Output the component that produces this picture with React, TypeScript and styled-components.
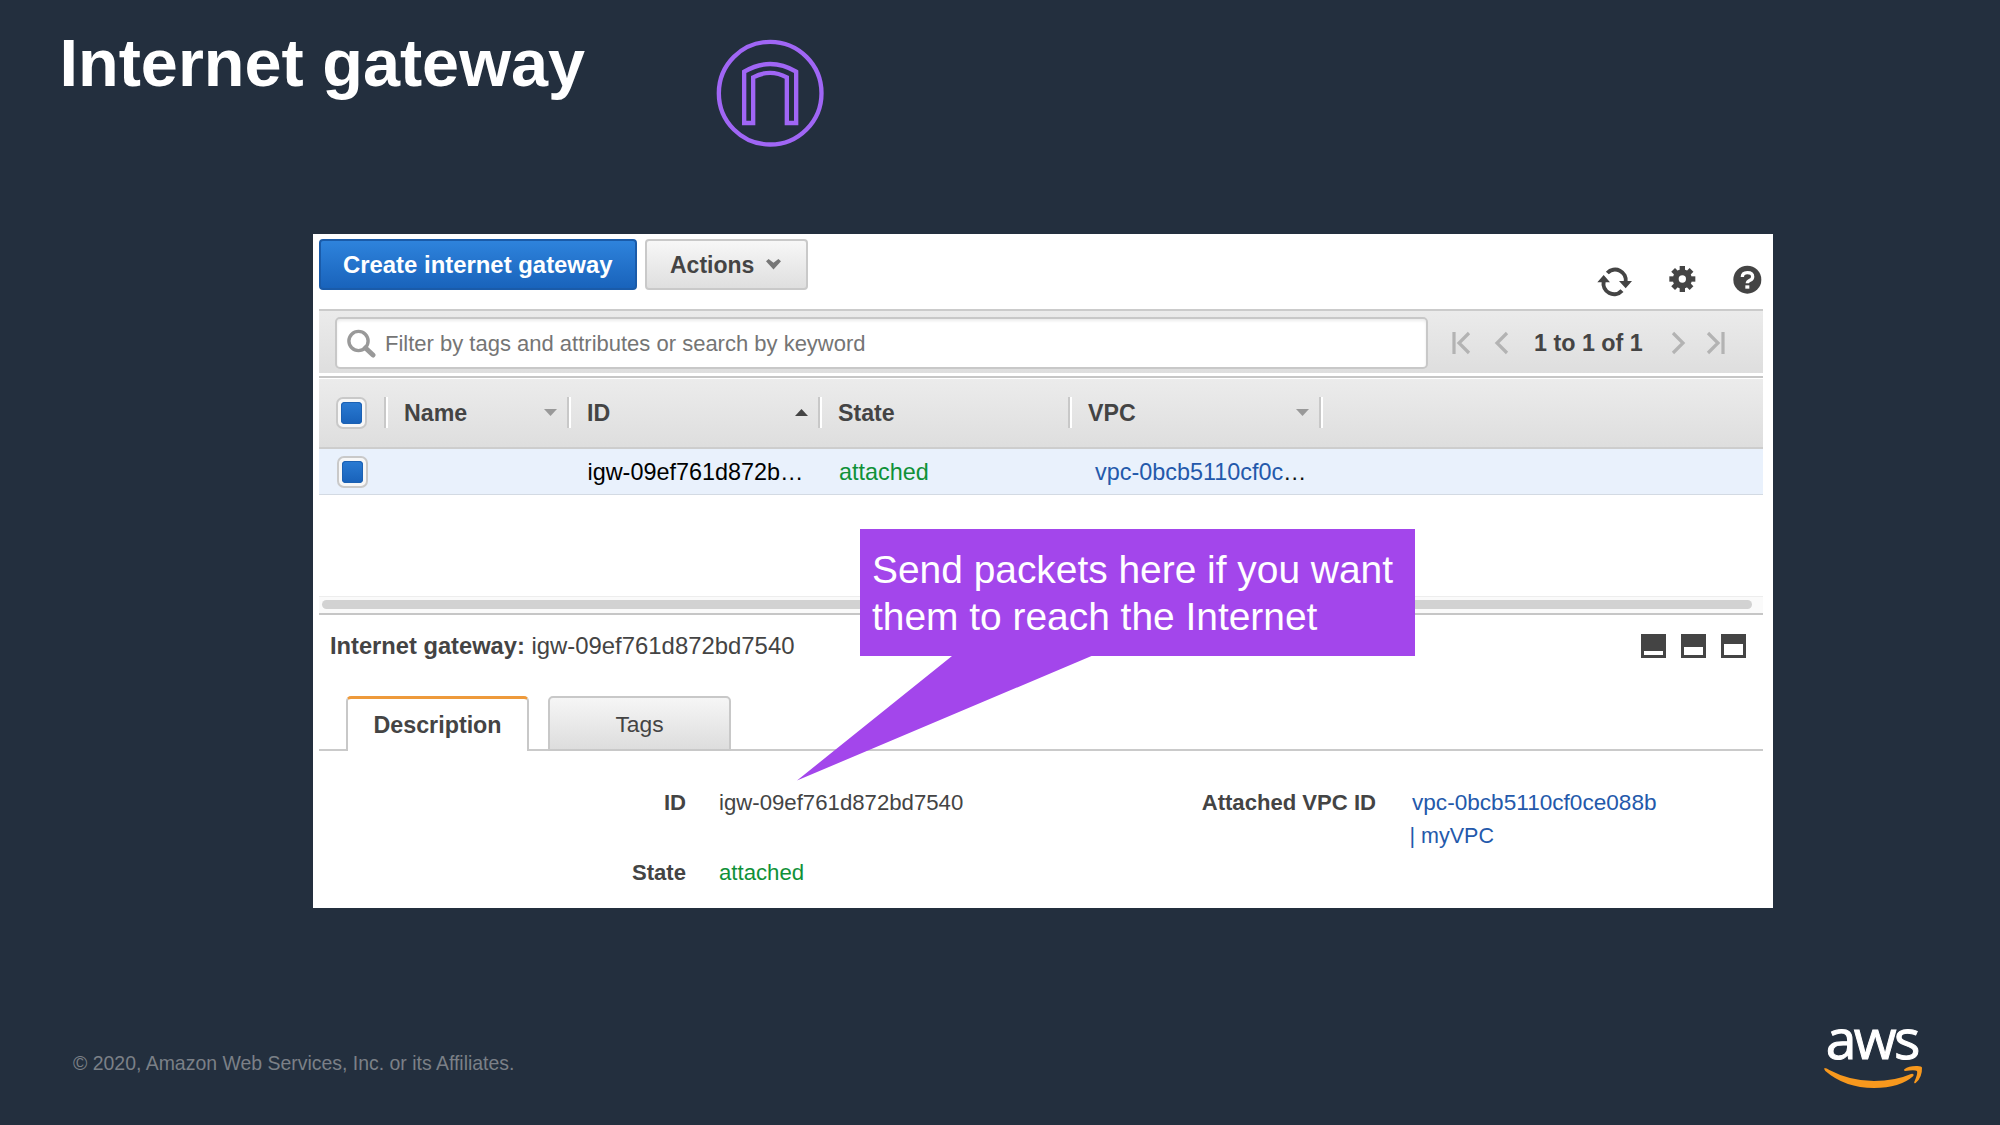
import React from "react";
import styled, { createGlobalStyle, css } from "styled-components";

const GlobalStyle = createGlobalStyle`
  *, *::before, *::after { box-sizing: border-box; }
  html, body { margin: 0; padding: 0; background: #232f3e; }
  body { font-family: "Liberation Sans", Arial, Helvetica, sans-serif; }
`;

const Slide = styled.main`
  width: 2000px;
  height: 1125px;
  display: flex;
  flex-direction: column;
  background: #232f3e;
  overflow: hidden;
`;

const SlideHeader = styled.header`
  display: flex;
  align-items: flex-start;
  height: 234px;
  padding: 25px 0 0 59.5px;
`;

const Title = styled.h1`
  margin: 0;
  width: 650.5px;
  font-size: 66.6px;
  line-height: 76px;
  font-weight: 700;
  color: #fff;
  white-space: nowrap;
`;

const GatewayIcon = styled.svg`
  width: 120px;
  height: 120px;
  margin-top: 9px;
`;

const Panel = styled.section`
  position: relative;
  width: 1460px;
  height: 674px;
  margin-left: 313px;
  padding: 0 10px 0 6px;
  background: #fff;
  color: #444;
  display: flex;
  flex-direction: column;
`;

const Toolbar = styled.div`
  display: flex;
  justify-content: space-between;
  height: 75px;
  padding: 5px 1px 0 0;
`;

const ButtonGroup = styled.div`
  display: flex;
  gap: 8px;
`;

const Button = styled.button<{ $primary?: boolean }>`
  display: flex;
  align-items: center;
  height: 51px;
  padding: 1px 23px 0;
  border-radius: 4px;
  font: 700 23px/26px "Liberation Sans", Arial, sans-serif;
  white-space: nowrap;
  ${(p) =>
    p.$primary
      ? css`
          width: 318px;
          padding-left: 22px;
          border: 2px solid #1a5ba9;
          background: linear-gradient(#2e83dc, #1963bb);
          color: #fff;
          font-size: 23.9px;
        `
      : css`
          width: 163px;
          border: 2px solid #c9c9c9;
          background: linear-gradient(#f7f7f7, #dfdfdf);
          color: #444;
          gap: 11px;
        `}
`;

const ToolIcons = styled.div`
  display: flex;
  align-items: flex-start;
  padding-top: 21px;
`;

const ToolIcon = styled.svg`
  width: 180px;
  height: 50px;
  margin: 0 -8px 0 0;
`;

const FilterBar = styled.div`
  display: flex;
  align-items: center;
  height: 64px;
  padding: 2px 37px 0 16px;
  border-top: 2px solid #cbcbcb;
  background: linear-gradient(#ebebeb, #dedede);
`;

const SearchBox = styled.div`
  display: flex;
  align-items: center;
  width: 1094px;
  height: 52px;
  padding-left: 9px;
  gap: 8px;
  border: 2px solid #c8c8c8;
  border-radius: 5px;
  background: #fff;
  box-shadow: inset 0 2px 3px #ececec;
`;

const Placeholder = styled.span`
  padding-top: 2px;
  font-size: 22px;
  line-height: 26px;
  color: #757575;
`;

const Pager = styled.nav`
  flex: 1;
  display: flex;
  align-items: center;
  padding-left: 23px;
`;

const PagerArrow = styled.svg<{ $gap?: number }>`
  width: 20px;
  height: 24px;
  margin-right: ${(p) => p.$gap ?? 0}px;
  fill: none;
  stroke: #b3b3b3;
  stroke-width: 3.2;
`;

const PagerText = styled.span`
  width: 137px;
  font-size: 23.3px;
  font-weight: 700;
  line-height: 26px;
  white-space: nowrap;
`;

const Row = styled.div<{ $head?: boolean }>`
  display: grid;
  grid-template-columns: 65px 183px 251px 250px 251px 1fr;
  align-items: center;
  ${(p) =>
    p.$head
      ? css`
          height: 73px;
          margin-top: 3px;
          border-top: 2px solid #c6c6c6;
          border-bottom: 2px solid #cdcdcd;
          box-shadow: inset 0 1px #fff;
          background: linear-gradient(#ececec, #dedede);
          font-weight: 700;
          font-size: 23.2px;
        `
      : css`
          height: 46px;
          border-bottom: 1px solid #d3dae3;
          background: #e9f1fc;
          font-size: 23.4px;
          color: #000;
        `}
`;

const HeadCell = styled.div`
  display: flex;
  align-items: center;
  justify-content: space-between;
  height: 31px;
  padding: 0 10px 0 18px;
  border-left: 2px solid #c8c8c8;
  box-shadow: inset 2px 0 #fff;
`;

const HeadLabel = styled.span`
  padding-top: 2px;
`;

const CheckCell = styled.div<{ $shift?: number }>`
  padding-left: ${(p) => 17 + (p.$shift ?? 0)}px;
`;

const Checkbox = styled.div`
  display: grid;
  place-items: center;
  width: 31px;
  height: 32px;
  border: 2px solid #c9c9c9;
  border-radius: 7px;
  background: #f7f7f7;
  &::after {
    content: "";
    width: 21px;
    height: 22px;
    border-radius: 4px;
    background: linear-gradient(#2a7bd3, #1861b9);
    box-shadow: inset 0 0 0 1px #1b61b3;
  }
`;

const SortArrow = styled.svg<{ $active?: boolean }>`
  width: 13px;
  height: 7px;
  fill: ${(p) => (p.$active ? "#444" : "#999")};
`;

const Cell = styled.div<{ $pad?: number; $tone?: "green" | "link" }>`
  padding-left: ${(p) => p.$pad ?? 0}px;
  line-height: 28px;
  white-space: nowrap;
  color: ${(p) => (p.$tone === "green" ? "#0f9138" : p.$tone === "link" ? "#2459ab" : "#000")};
`;

const Dots = styled.span`
  color: #111;
`;

const ScrollTrack = styled.div`
  height: 19px;
  margin-top: 101px;
  padding: 3px 11px 0 3px;
  border-top: 1px solid #ededed;
  border-bottom: 2px solid #c6c6c6;
  background: #fafafa;
`;

const ScrollThumb = styled.div`
  height: 9px;
  border-radius: 5px;
  background: #d2d2d2;
`;

const DetailHeader = styled.div`
  display: flex;
  align-items: center;
  justify-content: space-between;
  height: 62px;
  padding: 0 17px 0 11px;
  font-size: 23.9px;
  line-height: 28px;
`;

const DetailName = styled.strong`
  font-size: 23.7px;
`;

const SizeButtons = styled.div`
  display: flex;
  gap: 15px;
`;

const SizeButton = styled.span<{ $open: number }>`
  display: flex;
  align-items: flex-end;
  width: 25px;
  height: 24px;
  padding: 3px;
  background: #444;
  &::after {
    content: "";
    width: 19px;
    height: ${(p) => p.$open}px;
    background: #fff;
  }
`;

const TabStrip = styled.div`
  display: flex;
  align-items: flex-end;
  height: 74px;
  padding-left: 27px;
  gap: 19px;
  box-shadow: inset 0 -2px #cacaca;
`;

const Tab = styled.div<{ $active?: boolean }>`
  width: 183px;
  height: 55px;
  text-align: center;
  border: 2px solid #c8c8c8;
  border-radius: 5px 5px 0 0;
  line-height: 52px;
  ${(p) =>
    p.$active
      ? css`
          border-top: 3px solid #ee9a3b;
          border-bottom: 0;
          background: #fff;
          font-weight: 700;
          font-size: 23.3px;
        `
      : css`
          background: linear-gradient(#f6f6f6, #dddddd);
          font-size: 22.8px;
        `}
`;

const Details = styled.dl`
  display: grid;
  grid-template-columns: 367px 367px 323px 1fr;
  grid-template-rows: 70px 34px;
  margin: 35px 0 0;
  font-size: 22.1px;
  line-height: 34px;
`;

const Label = styled.dt`
  text-align: right;
  font-weight: 700;
`;

const Value = styled.dd<{ $tone?: "green" | "link"; $indent: number }>`
  margin: 0;
  padding-left: ${(p) => p.$indent}px;
  font-size: ${(p) => (p.$tone === "link" ? 22.6 : 22.2)}px;
  line-height: 34px;
  white-space: nowrap;
  color: ${(p) => (p.$tone === "green" ? "#0f9138" : p.$tone === "link" ? "#2459ab" : "#444")};
`;

const VpcName = styled.div`
  font-size: 21.5px;
  margin-left: -2.5px;
  line-height: 32px;
`;

const Callout = styled.aside`
  position: absolute;
  left: 546.5px;
  top: 295px;
  width: 555.5px;
  height: 127px;
  padding: 18px 0 0 12.5px;
  background: #a346eb;
  color: #fff;
  font-size: 38.9px;
  line-height: 46.6px;
  white-space: nowrap;
`;

const CalloutTail = styled.svg`
  position: absolute;
  left: 484px;
  top: 421px;
  width: 300px;
  height: 127px;
  fill: #a346eb;
`;

const SlideFooter = styled.footer`
  flex: 1;
  display: flex;
  justify-content: space-between;
  align-items: flex-start;
  padding: 102px 50px 0 73px;
`;

const Copyright = styled.p`
  margin: 42px 0 0;
  font-size: 19.45px;
  line-height: 22px;
  color: #7b8087;
`;

const AwsLogo = styled.svg`
  width: 150px;
  height: 90px;
  overflow: visible;
  text {
    font-family: "Open Sans", "Noto Sans", sans-serif;
    font-size: 166px;
    fill: #fff;
    stroke: #fff;
    stroke-width: 3;
  }
`;

const tooth = [0, 45, 90, 135, 180, 225, 270, 315];

export default function App() {
  return (
    <>
      <GlobalStyle />
      <Slide>
        <SlideHeader>
          <Title>Internet gateway</Title>
          <GatewayIcon viewBox="0 0 360 360" fill="none" stroke="#a066f5">
            <circle cx="180.5" cy="177.5" r="154" strokeWidth="13" />
            <path
              d="M102.500 267V113Q180.500 67 258.500 113V267H230.500V130Q180.500 103 129.500 130V267Z"
              strokeWidth="13"
            />
          </GatewayIcon>
        </SlideHeader>

        <Panel>
          <Toolbar>
            <ButtonGroup>
              <Button $primary>Create internet gateway</Button>
              <Button>
                Actions
                <svg width="17" height="12" viewBox="0 0 17 12">
                  <path d="M1 2.200 3.600 0 8.500 3.800 13.400 0 16 2.200 8.500 10.500Z" fill="#777" />
                </svg>
              </Button>
            </ButtonGroup>
            <ToolIcons>
              <ToolIcon viewBox="0 0 540 150">
                <g fill="none" stroke="#444" strokeWidth="12">
                  <path d="M52 39A32 32 0 0 1 107 66" />
                  <path d="M96 92A32 32 0 0 1 41 64" />
                </g>
                <path d="M87 63H126L107 85ZM22 67H60L41 45Z" fill="#444" />
                <g fill="#444">
                  {tooth.map((a) => (
                    <rect key={a} x="269" y="18" width="16" height="18" transform={`rotate(${a} 277 57)`} />
                  ))}
                </g>
                <circle cx="277" cy="57" r="20" fill="none" stroke="#444" strokeWidth="18" />
                <circle cx="472" cy="59" r="42" fill="#444" />
                <path d="M457 51Q457 38 472 38Q488 38 488 50Q488 57 480 61Q472 65 472 70" fill="none" stroke="#fff" strokeWidth="10" />
                <rect x="466" y="76" width="12" height="10" fill="#fff" />
              </ToolIcon>
            </ToolIcons>
          </Toolbar>

          <FilterBar>
            <SearchBox>
              <svg width="31" height="30" viewBox="0 0 31 30" fill="none" stroke="#999">
                <circle cx="12.500" cy="13" r="9.600" strokeWidth="3.400" />
                <path d="M19.500 20 27 27" strokeWidth="5" strokeLinecap="round" />
              </svg>
              <Placeholder>Filter by tags and attributes or search by keyword</Placeholder>
            </SearchBox>
            <Pager>
              <PagerArrow viewBox="0 0 20 24" $gap={22}><path d="M3 1V23M18 2 8 12 18 22" /></PagerArrow>
              <PagerArrow viewBox="0 0 20 24" $gap={21}><path d="M14 2 4 12 14 22" /></PagerArrow>
              <PagerText>1 to 1 of 1</PagerText>
              <PagerArrow viewBox="0 0 20 24" $gap={15}><path d="M2 2 12 12 2 22" /></PagerArrow>
              <PagerArrow viewBox="0 0 20 24"><path d="M2 2 12 12 2 22M17 1V23" /></PagerArrow>
            </Pager>
          </FilterBar>

          <Row $head>
            <CheckCell><Checkbox /></CheckCell>
            <HeadCell>
              <HeadLabel>Name</HeadLabel>
              <SortArrow viewBox="0 0 13 7"><path d="M0 0H13L6.500 7Z" /></SortArrow>
            </HeadCell>
            <HeadCell>
              <HeadLabel>ID</HeadLabel>
              <SortArrow $active viewBox="0 0 13 7"><path d="M0 7H13L6.500 0Z" /></SortArrow>
            </HeadCell>
            <HeadCell>
              <HeadLabel>State</HeadLabel>
            </HeadCell>
            <HeadCell>
              <HeadLabel>VPC</HeadLabel>
              <SortArrow viewBox="0 0 13 7"><path d="M0 0H13L6.500 7Z" /></SortArrow>
            </HeadCell>
            <HeadCell />
          </Row>
          <Row>
            <CheckCell $shift={1}><Checkbox /></CheckCell>
            <Cell />
            <Cell $pad={20.5}>igw-09ef761d872b…</Cell>
            <Cell $pad={21} $tone="green">attached</Cell>
            <Cell $pad={27} $tone="link">vpc-0bcb5110cf0c<Dots>…</Dots></Cell>
            <Cell />
          </Row>

          <ScrollTrack><ScrollThumb /></ScrollTrack>

          <DetailHeader>
            <span><DetailName>Internet gateway:</DetailName> igw-09ef761d872bd7540</span>
            <SizeButtons>
              <SizeButton $open={4} />
              <SizeButton $open={8} />
              <SizeButton $open={11} />
            </SizeButtons>
          </DetailHeader>

          <TabStrip>
            <Tab $active>Description</Tab>
            <Tab>Tags</Tab>
          </TabStrip>

          <Details>
            <Label>ID</Label>
            <Value $indent={33}>igw-09ef761d872bd7540</Value>
            <Label>Attached VPC ID</Label>
            <Value $indent={36} $tone="link">
              vpc-0bcb5110cf0ce088b
              <VpcName>| myVPC</VpcName>
            </Value>
            <Label>State</Label>
            <Value $indent={33} $tone="green">attached</Value>
          </Details>

          <CalloutTail viewBox="0 0 300 127"><path d="M156 0H296L294.500 1 0 125.500 155 1Z" /></CalloutTail>
          <Callout>
            Send packets here if you want
            <br />
            them to reach the Internet
          </Callout>
        </Panel>

        <SlideFooter>
          <Copyright>© 2020, Amazon Web Services, Inc. or its Affiliates.</Copyright>
          <AwsLogo viewBox="0 0 450 270">
            <text x="77" y="148" textLength="284" lengthAdjust="spacing">aws</text>
            <path
              d="M73 174Q80 174 88 180Q150 213 222 213Q285 213 333 192Q343 190 340 198Q300 234 222 234Q135 234 76 183Q72 179 73 174Z"
              fill="#f7981d"
            />
            <path
              d="M313 178Q326 168 348 168Q365 167 366 173Q367 202 347 219Q341 222 343 215Q354 191 351 183Q344 178 316 183Q310 183 313 178Z"
              fill="#f7981d"
            />
          </AwsLogo>
        </SlideFooter>
      </Slide>
    </>
  );
}
